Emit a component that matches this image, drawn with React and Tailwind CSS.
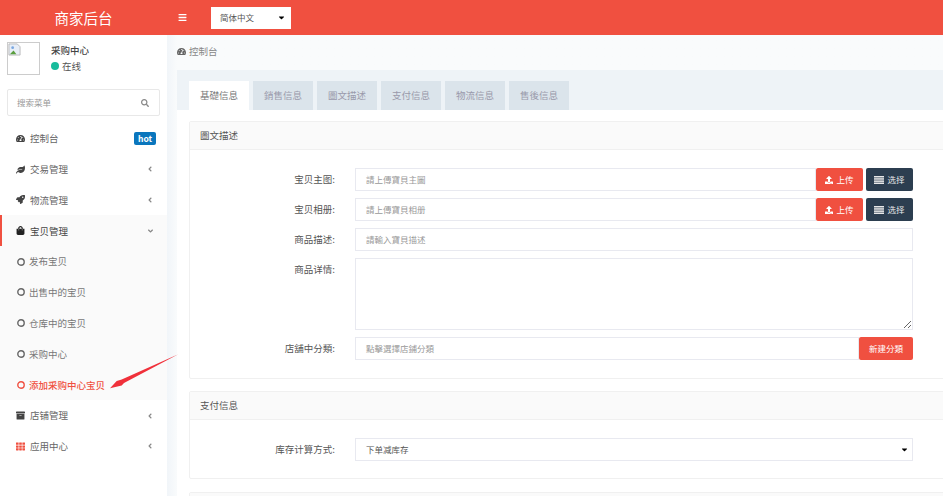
import React from "react";
import { FaTachometerAlt, FaLeaf, FaRocket, FaShoppingBag, FaArchive, FaTh, FaUpload, FaSearch, FaBars, FaAngleLeft, FaAngleDown, FaCaretDown } from "react-icons/fa";

const font = { fontFamily: '"Noto Sans CJK SC","Noto Sans CJK TC",sans-serif' };

function ListIcon() {
  return (
    <svg viewBox="0 0 10 8" className="mr-[3px] h-[8px] w-[10px]" fill="#e8e8e8">
      <rect x="0" y="0" width="10" height="1.5" />
      <rect x="0" y="2.2" width="10" height="1.5" />
      <rect x="0" y="4.4" width="10" height="1.5" />
      <rect x="0" y="6.5" width="10" height="1.5" />
    </svg>
  );
}

function MenuItem({ icon: Icon, label, arrow, iconClass = "text-[#444]", active, badge }) {
  return (
    <div className={`flex h-[30.8px] items-center pl-4 pr-[11px] text-[9.5px] ${active ? "border-l-2 border-[#f05040] pl-[14px] text-[#444]" : "text-[#666]"}`}>
      <Icon className={`mr-[5px] h-[9px] w-[9px] shrink-0 ${iconClass}`} />
      <span className="flex-1">{label}</span>
      {badge && <span className="w-[22px] rounded-[2px] bg-[#0a76bd] text-center text-[8.5px] font-bold leading-[13px] text-white">{badge}</span>}
      {arrow === "left" && <FaAngleLeft className="mr-[3px] h-[8px] w-[6px] text-[#888]" />}
      {arrow === "down" && <FaAngleDown className="mr-[2px] h-[8px] w-[7px] text-[#888]" />}
    </div>
  );
}

function SubItem({ label, current }) {
  return (
    <div className={`flex h-[30.8px] items-center pl-[17px] text-[9.5px] ${current ? "font-medium text-[#f05040]" : "text-[#777]"}`}>
      <svg viewBox="0 0 8 8" className="mr-[4px] h-2 w-2">
        <circle cx="4" cy="4" r="3.2" fill="none" stroke={current ? "#f05040" : "#666"} strokeWidth="1.4" />
      </svg>
      {label}
    </div>
  );
}

function Label({ children, className = "" }) {
  return <div className={`w-[145px] shrink-0 text-right text-[9.5px] leading-[23px] text-[#555] ${className}`}>{children}:</div>;
}

function Field({ placeholder, children }) {
  return (
    <div className="flex h-[23px] min-w-0 flex-1 items-center border border-[#e8e9f0] bg-white pl-[10px] text-[8.5px] text-[#999]">
      {placeholder}
      {children}
    </div>
  );
}

function UploadRow({ label, placeholder }) {
  return (
    <div className="mb-[7px] flex">
      <Label>{label}</Label>
      <div className="ml-[20px] flex w-[558px]">
        <Field placeholder={placeholder} />
        <button className="flex h-[23px] w-[47px] items-center justify-center rounded-[2px] bg-[#f05040] text-[8.5px] text-white">
          <FaUpload className="mr-[3px] h-[8px] w-[8px]" />上传
        </button>
        <button className="ml-[3px] flex h-[23px] w-[47px] items-center justify-center rounded-[2px] bg-[#2c3e50] text-[8.5px] text-[#e8e8e8]">
          <ListIcon />选择
        </button>
      </div>
    </div>
  );
}

function Tab({ children, active }) {
  return (
    <div className={`flex h-[29px] w-[60px] items-center justify-center text-[9.5px] ${active ? "bg-white text-[#777]" : "bg-[#dbe4eb] text-[#99a]"}`}>
      {children}
    </div>
  );
}

function Panel({ title, className = "", children }) {
  return (
    <div className={`w-[770px] rounded-[2px] border border-[#f0f0f0] bg-white ${className}`}>
      <div className="flex h-[28px] items-center border-b border-[#f0f0f0] bg-[#fafafa] pl-[10px] text-[9.5px] text-[#555]">{title}</div>
      {children}
    </div>
  );
}

export default function App() {
  return (
    <div style={font} className="relative h-[496px] w-[943px] overflow-hidden bg-white">
      <header className="flex h-[35px] items-center bg-[#f05040]">
        <div className="w-[167px] text-center text-[14.5px] text-white">商家后台</div>
        <FaBars className="ml-[11px] h-[9px] w-[9px] text-white" />
        <div className="ml-[24px] flex h-[22px] w-[80px] items-center justify-between bg-white pl-[9px] pr-[5px] text-[8.5px] text-[#555]">
          简体中文
          <FaCaretDown className="h-[9px] w-[9px] text-black" />
        </div>
      </header>
      <div className="flex h-[461px]">
        <aside className="w-[167px] shrink-0 bg-white">
          <div className="flex pl-[7px] pt-[7px]">
            <div className="h-[33px] w-[33px] border border-[#ccc] bg-white">
              <svg viewBox="0 0 14 14" className="h-[13px] w-[13px]">
                <path d="M1 1h9l3 3v9H1z" fill="#e8eef7" stroke="#aaa" strokeWidth="0.8" />
                <path d="M2 12l4-4 3 4z" fill="#5a9e3e" />
                <circle cx="5" cy="5" r="1.5" fill="#7aa7e0" />
              </svg>
            </div>
            <div className="ml-[11px] pt-[1px]">
              <div className="text-[9.5px] font-medium leading-[14px] text-[#444]">采购中心</div>
              <div className="mt-[2px] flex items-center text-[9.5px] leading-[14px] text-[#555]">
                <span className="mr-[3px] h-2 w-2 rounded-full bg-[#18bc9c]" />在线
              </div>
            </div>
          </div>
          <div className="mx-[7px] mt-[14px] flex h-[27px] items-center justify-between rounded-[2px] border border-[#e8e8e8] pl-[9px] pr-[10px] text-[8.5px] text-[#999]">
            搜索菜单
            <FaSearch className="h-2 w-2 text-[#888]" />
          </div>
          <nav className="mt-[7px]">
            <MenuItem icon={FaTachometerAlt} label="控制台" badge="hot" />
            <MenuItem icon={FaLeaf} label="交易管理" arrow="left" />
            <MenuItem icon={FaRocket} label="物流管理" arrow="left" />
            <div className="bg-[#fafafa]">
              <MenuItem icon={FaShoppingBag} label="宝贝管理" arrow="down" active iconClass="text-[#222]" />
              <SubItem label="发布宝贝" />
              <SubItem label="出售中的宝贝" />
              <SubItem label="仓库中的宝贝" />
              <SubItem label="采购中心" />
              <SubItem label="添加采购中心宝贝" current />
            </div>
            <MenuItem icon={FaArchive} label="店铺管理" arrow="left" />
            <MenuItem icon={FaTh} label="应用中心" arrow="left" iconClass="text-[#f05040]" />
          </nav>
        </aside>
        <main className="min-w-0 flex-1 bg-gradient-to-r from-[#f1f5f9] to-[#f9fbfc] to-[10px] pl-[10px]">
          <div className="flex h-[35px] items-center pb-[2px] text-[9.5px] text-[#888]">
            <FaTachometerAlt className="mr-[3px] h-[9px] w-[9px] text-[#666]" />控制台
          </div>
          <div className="bg-white">
            <div className="flex h-[40px] items-end gap-1 bg-[#eef3f7] pl-[12px]">
              <Tab active>基礎信息</Tab>
              <Tab>銷售信息</Tab>
              <Tab>圖文描述</Tab>
              <Tab>支付信息</Tab>
              <Tab>物流信息</Tab>
              <Tab>售後信息</Tab>
            </div>
            <div className="pl-[12px] pt-[11px]">
              <Panel title="圖文描述">
                <div className="pb-[18px] pt-[18px]">
                  <UploadRow label="宝贝主图" placeholder="請上傳寶貝主圖" />
                  <UploadRow label="宝贝相册" placeholder="請上傳寶貝相册" />
                  <div className="mb-[7px] flex">
                    <Label>商品描述</Label>
                    <div className="ml-[20px] flex w-[558px]"><Field placeholder="請輸入寶貝描述" /></div>
                  </div>
                  <div className="mb-[7px] flex">
                    <Label>商品详情</Label>
                    <textarea className="ml-[20px] block h-[72px] w-[558px] border border-[#e8e9f0] bg-white" />
                  </div>
                  <div className="flex">
                    <Label>店舖中分類</Label>
                    <div className="ml-[20px] flex w-[558px]">
                      <Field placeholder="點擊選擇店鋪分類" />
                      <button className="h-[23px] w-[54px] rounded-[2px] bg-[#f05040] text-[8.5px] text-white">新建分類</button>
                    </div>
                  </div>
                </div>
              </Panel>
              <Panel title="支付信息" className="mt-[12px]">
                <div className="pb-[17px] pt-[18px]">
                  <div className="flex">
                    <Label>库存计算方式</Label>
                    <div className="ml-[20px] flex w-[558px]">
                      <Field>
                        <span className="flex-1 text-[#555]">下单减库存</span>
                        <FaCaretDown className="mr-[3px] h-[9px] w-[9px] text-black" />
                      </Field>
                    </div>
                  </div>
                </div>
              </Panel>
              <Panel title="" className="mt-[13px]" />
            </div>
          </div>
        </main>
      </div>
      <svg className="pointer-events-none absolute left-[108px] top-[352px] h-[40px] w-[72px]" viewBox="0 0 72 40">
        <path d="M70.3 2.3 L13.7 27.5 L8.7 29 L2 36.3 L13.7 33.5 L16 30.9 Z" fill="#f0303a" />
      </svg>
    </div>
  );
}
